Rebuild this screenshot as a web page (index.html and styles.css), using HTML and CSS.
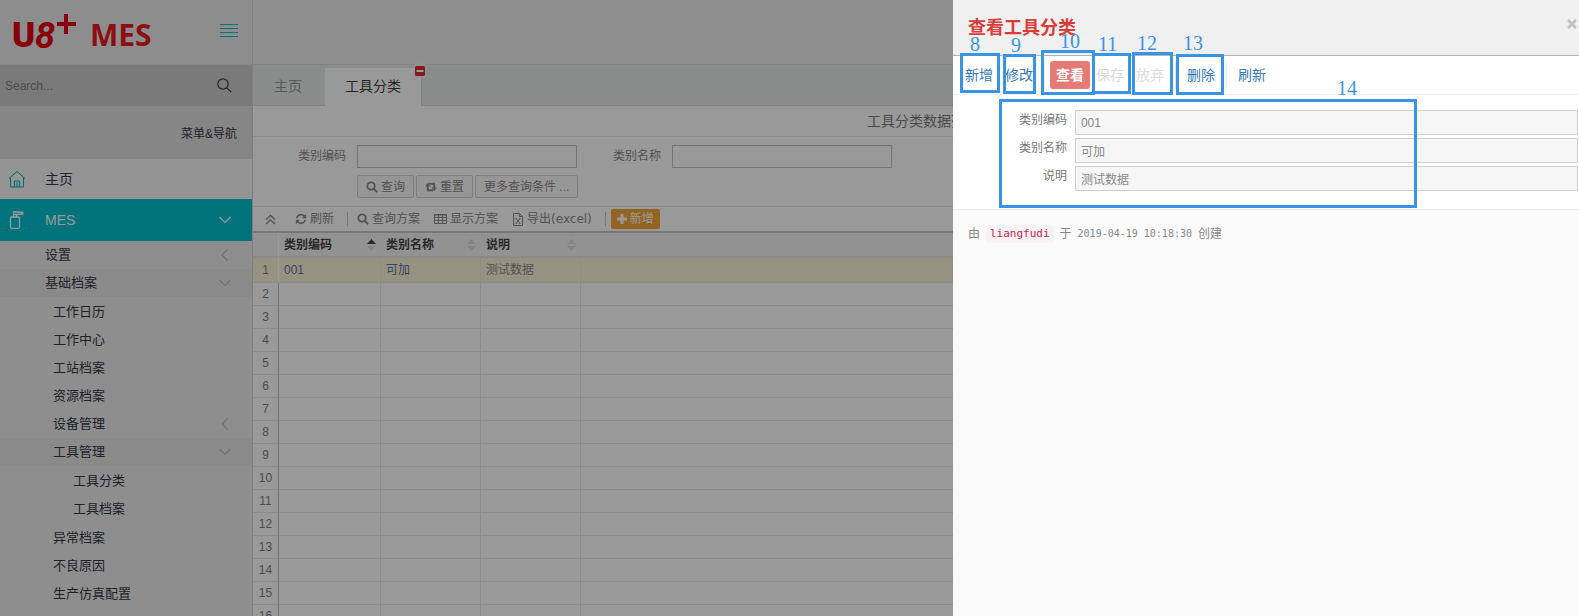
FILE: index.html
```html
<!DOCTYPE html>
<html lang="zh-CN">
<head>
<meta charset="utf-8">
<title>U8+ MES</title>
<link rel="stylesheet" href="styles.css">
</head>
<body>
<svg class="defs" aria-hidden="true">
  <symbol id="search" viewBox="0 0 13 13"><g fill="none" stroke="currentColor" stroke-width="2"><circle cx="5.500" cy="5.500" r="4"/><path stroke-linecap="round" stroke-width="2.200" d="m8.800 8.800 2.700 2.700"/></g></symbol>
  <symbol id="refresh" viewBox="0 0 1792 1792"><path fill="currentColor" d="M1639 1056q0 5-1 7-64 268-268 434.500t-478 166.500q-146 0-282.500-55t-243.500-157l-129 129q-19 19-45 19t-45-19-19-45v-448q0-26 19-45t45-19h448q26 0 45 19t19 45-19 45l-137 137q71 66 161 102t187 36q134 0 250-65t186-179q11-17 53-117 8-23 30-23h192q13 0 22.500 9.500t9.500 22.500zm25-800v448q0 26-19 45t-45 19h-448q-26 0-45-19t-19-45 19-45l138-138q-148-137-349-137-134 0-250 65t-186 179q-11 17-53 117-8 23-30 23h-199q-13 0-22.500-9.500t-9.500-22.500v-7q65-268 270-434.500t480-166.500q146 0 284 55.500t245 156.500l130-129q19-19 45-19t45 19 19 45z"/></symbol>
  <symbol id="down" viewBox="0 0 12 12"><path fill="none" stroke="currentColor" stroke-width="1.200" d="M.5 3 6 8.500 11.500 3"/></symbol>
  <symbol id="left" viewBox="0 0 12 12"><path fill="none" stroke="currentColor" stroke-width="1.200" d="M8.500.5 3 6l5.500 5.500"/></symbol>
  <symbol id="sort" viewBox="0 0 9 12"><path class="up" d="M0 5h9L4.500 0z"/><path class="dn" d="M0 7h9L4.500 12z"/></symbol>
</svg>

<div class="app">
  <aside class="sidebar">
    <div class="brand">
      <svg class="logo" width="146" height="52" viewBox="0 0 146 52" role="img" aria-label="U8+ MES">
        <text class="logo-u" x="-1" y="41">U</text>
        <text class="logo-8" x="22" y="42">8</text>
        <path fill="#e60012" d="M51 8h4v8h8v4h-8v8h-4v-8h-7v-4h7z"/>
        <text class="logo-mes" x="77" y="40">MES</text>
      </svg>
      <button class="menu-toggle" type="button" aria-label="切换菜单"><svg width="18" height="16" viewBox="0 0 18 16"><path stroke="currentColor" d="M0 .5h18M0 4.500h18M0 8.500h18M0 12.500h18"/></svg></button>
    </div>
    <form class="side-search">
      <input type="text" placeholder="Search..." aria-label="搜索菜单">
      <button type="button" aria-label="搜索"><svg width="15" height="15" viewBox="0 0 15 15"><g fill="none" stroke="currentColor" stroke-width="1.200"><circle cx="6" cy="6" r="5.200"/><path d="m9.800 9.800 4.400 4.400"/></g></svg></button>
    </form>
    <div class="side-label">菜单&amp;导航</div>
    <nav class="menu">
      <a class="top" href="#"><svg class="lead" width="18" height="18" viewBox="0 0 18 18"><path fill="none" stroke="currentColor" d="M1 8.500 9 1.500l8 7M2.500 7.500v9.500h13V7.500M6.500 17v-6h5v6M9 12v5"/></svg>主页</a>
      <a class="top active" href="#"><svg class="lead" width="18" height="18" viewBox="0 0 18 18"><g fill="none" stroke="currentColor" stroke-width="1.300"><rect x="2.500" y="6" width="9" height="11.300" rx="1"/><path d="M5.500 6V3.500h3V6M5.500 2.500V1H9l6.500.500M9 3.500l6.500-.500"/></g></svg>MES<svg class="chev" width="12" height="12"><use href="#down"/></svg></a>
      <a class="lv1" href="#">设置<svg class="chev" width="12" height="12"><use href="#left"/></svg></a>
      <a class="lv1 open" href="#">基础档案<svg class="chev" width="12" height="12"><use href="#down"/></svg></a>
      <div class="sub">
        <a class="lv2" href="#">工作日历</a>
        <a class="lv2" href="#">工作中心</a>
        <a class="lv2" href="#">工站档案</a>
        <a class="lv2" href="#">资源档案</a>
        <a class="lv2" href="#">设备管理<svg class="chev" width="12" height="12"><use href="#left"/></svg></a>
        <a class="lv2 open" href="#">工具管理<svg class="chev" width="12" height="12"><use href="#down"/></svg></a>
        <div class="sub">
          <a class="lv3" href="#">工具分类</a>
          <a class="lv3" href="#">工具档案</a>
        </div>
        <a class="lv2" href="#">异常档案</a>
        <a class="lv2" href="#">不良原因</a>
        <a class="lv2" href="#">生产仿真配置</a>
      </div>
    </nav>
  </aside>

  <main class="main">
    <div class="topbar"></div>
    <div class="tabs">
      <a class="tab" href="#">主页</a>
      <a class="tab current" href="#">工具分类<span class="tab-close"><svg width="13" height="15" viewBox="0 0 13 15"><rect x="1" y="3" width="10" height="10" rx="1.500" fill="#e02828"/><path stroke="#fff" stroke-width="2" d="M2.500 8h7"/></svg></span></a>
    </div>
    <h2 class="page-title">工具分类数据列表</h2>
    <form class="filter">
      <label for="f-code">类别编码</label><input id="f-code" type="text">
      <label for="f-name">类别名称</label><input id="f-name" type="text">
      <div class="filter-actions">
        <button type="button"><svg width="12" height="12"><use href="#search"/></svg>查询</button>
        <button type="button"><svg width="12" height="12" viewBox="0 0 13 13"><path fill="currentColor" d="M3 2 6 6H4v3h4l1.500 2H2V6H0zM10 11 7 7h2V4H5L3.500 2H11v5h2z"/></svg>重置</button>
        <button type="button" class="more">更多查询条件 ...</button>
      </div>
    </form>
    <div class="toolbar">
      <button type="button" class="collapse" aria-label="收起"><svg width="11" height="11" viewBox="0 0 11 11"><path fill="none" stroke="currentColor" stroke-width="1.400" d="m1 5.500 4.500-4 4.500 4M1 10l4.500-4 4.500 4"/></svg></button>
      <button type="button" class="reload"><svg width="12" height="12"><use href="#refresh"/></svg>刷新</button>
      <span class="sep"></span>
      <button type="button"><svg width="12" height="12"><use href="#search"/></svg>查询方案</button>
      <button type="button"><svg width="13" height="12" viewBox="0 0 13 12"><path fill="none" stroke="currentColor" d="M.5 1.500h12v9H.5zM.5 4.500h12M.5 7.500h12M4.500 1.500v9M8.500 1.500v9M.5 2h12"/></svg>显示方案</button>
      <button type="button" class="export"><svg width="12" height="13" viewBox="0 0 12 13"><path fill="none" stroke="currentColor" d="M1.500.5h6l3 3v9h-9zM7.500.5v3h3M4 5.500l4 5M8 5.500l-4 5M3.500 5.500h1.500M7 5.500h1.500M3.500 10.500h1.500M7 10.500h1.500"/></svg>导出(excel)</button>
      <span class="sep"></span>
      <button type="button" class="add"><svg width="10" height="10" viewBox="0 0 10 10"><path fill="currentColor" d="M3.500 0h3v3.500H10v3H6.500V10h-3V6.500H0v-3h3.500z"/></svg>新增</button>
    </div>
    <table class="grid">
      <colgroup><col class="c-num"><col class="c-first"><col class="c-mid"><col class="c-mid"><col></colgroup>
      <thead><tr><th></th>
        <th>类别编码<svg class="sort asc" width="9" height="12"><use href="#sort"/></svg></th>
        <th>类别名称<svg class="sort" width="9" height="12"><use href="#sort"/></svg></th>
        <th>说明<svg class="sort" width="9" height="12"><use href="#sort"/></svg></th><th></th></tr></thead>
      <tbody>
        <tr class="selected"><td>1</td><td><a href="#">001</a></td><td><a href="#">可加</a></td><td>测试数据</td><td></td></tr>
        <tr><td>2</td><td></td><td></td><td></td><td></td></tr>
        <tr><td>3</td><td></td><td></td><td></td><td></td></tr>
        <tr><td>4</td><td></td><td></td><td></td><td></td></tr>
        <tr><td>5</td><td></td><td></td><td></td><td></td></tr>
        <tr><td>6</td><td></td><td></td><td></td><td></td></tr>
        <tr><td>7</td><td></td><td></td><td></td><td></td></tr>
        <tr><td>8</td><td></td><td></td><td></td><td></td></tr>
        <tr><td>9</td><td></td><td></td><td></td><td></td></tr>
        <tr><td>10</td><td></td><td></td><td></td><td></td></tr>
        <tr><td>11</td><td></td><td></td><td></td><td></td></tr>
        <tr><td>12</td><td></td><td></td><td></td><td></td></tr>
        <tr><td>13</td><td></td><td></td><td></td><td></td></tr>
        <tr><td>14</td><td></td><td></td><td></td><td></td></tr>
        <tr><td>15</td><td></td><td></td><td></td><td></td></tr>
        <tr><td>16</td><td></td><td></td><td></td><td></td></tr>
      </tbody>
    </table>
  </main>
</div>

<div class="backdrop"></div>

<section class="drawer" role="dialog" aria-labelledby="drawer-title">
  <header class="drawer-head">
    <h1 id="drawer-title">查看工具分类</h1>
    <button type="button" class="close" aria-label="关闭"><svg width="10" height="10" viewBox="0 0 10 10"><path stroke="currentColor" stroke-width="2.500" d="m1 1 8 8M9 1 1 9"/></svg></button>
  </header>
  <div class="drawer-tools">
    <button type="button">新增</button>
    <button type="button">修改</button>
    <span class="line"></span>
    <button type="button" class="view">查看</button>
    <button type="button" disabled>保存</button>
    <button type="button" disabled>放弃</button>
    <span class="line"></span>
    <button type="button">删除</button>
    <span class="line"></span>
    <button type="button">刷新</button>
  </div>
  <form class="detail">
    <label for="d-code">类别编码</label><input id="d-code" type="text" value="001" readonly>
    <label for="d-name">类别名称</label><input id="d-name" type="text" value="可加" readonly>
    <label for="d-note">说明</label><input id="d-note" type="text" value="测试数据" readonly>
  </form>
  <footer class="drawer-foot"><span>由</span><code>liangfudi</code><span>于</span><time>2019-04-19 10:18:30</time><span>创建</span></footer>

  <div class="mark m8"><b>8</b></div>
  <div class="mark m9"><b>9</b></div>
  <div class="mark m10"><b>10</b></div>
  <div class="mark m11"><b>11</b></div>
  <div class="mark m12"><b>12</b></div>
  <div class="mark m13"><b>13</b></div>
  <div class="mark m14"><b>14</b></div>
</section>
</body>
</html>
```
FILE: styles.css
```css
* { box-sizing: border-box; }

body {
  margin: 0;
  height: 100vh;
  overflow: hidden;
  font: 12px/20px "Liberation Sans", "Noto Sans CJK SC", sans-serif;
  color: #8a8a8a;
  background: #fff;
}

a { color: inherit; text-decoration: none; }
button, input { font: inherit; color: inherit; margin: 0; padding: 0; border: 0; border-radius: 0; background: none; outline: 0; }
svg { flex: none; display: block; }
.defs { position: absolute; width: 0; height: 0; }

.app { display: flex; height: 100vh; overflow: hidden; }

/* Sidebar */
.sidebar { flex: none; width: 253px; border-right: 1px solid #d4d4d4; background: #ededed; color: #353a48; overflow: hidden; }
.brand { display: flex; align-items: center; justify-content: space-between; height: 65px; padding: 0 14px 0 13px; border-bottom: 1px solid #dcdcdc; background: #ebebeb; }
.logo { overflow: visible; }
.logo text { fill: #e60012; }
.logo .logo-u { font: 900 35px Roboto, sans-serif; }
.logo .logo-8 { font: italic 700 36px Roboto, sans-serif; }
.logo .logo-mes { fill: #ea1a22; font: 700 30px "Open Sans", sans-serif; }
.menu-toggle { color: #00bfcf; }
.side-search { display: flex; align-items: center; height: 41px; padding: 0 20px 0 5px; background: #cbcbcb; color: #33363c; }
.side-search input { flex: 1; min-width: 0; }
.side-search input::placeholder { color: #808080; }
.side-label { height: 53px; padding: 18px 15px 0 0; text-align: right; background: #dfdfdf; }
.menu a { display: flex; align-items: center; height: 28px; padding: 0 21px 0 45px; font-size: 13px; }
.menu a.top { height: 40px; padding-left: 8px; font-size: 14px; background: #f7f7f7; }
.menu a.active { height: 42px; background: #00c0d1; color: #fff; }
.menu .lead { margin-right: 19px; color: #00b0c0; }
.menu .active .lead { color: #fff; }
.menu .chev { margin-left: auto; color: #bfbfc4; }
.menu .active .chev { color: #fff; }
.menu .open { background: #e6e6e6; }
.menu .lv2 { padding-left: 53px; }
.menu .lv3 { padding-left: 73px; }
.menu .sub { padding: 1px 0; }

/* List page */
.main { flex: 1; min-width: 0; background: #fff; }
.topbar { height: 65px; border-bottom: 1px solid #dadada; background: #efefef; }
.tabs { display: flex; align-items: stretch; height: 41px; padding-top: 3px; border-bottom: 1px solid #d8dcdb; background: #e5eae8; font-size: 14px; }
.tab { position: relative; display: flex; align-items: center; padding: 0 23px 0 21px; height: 35px; color: #8f9493; }
.tab.current { height: 38px; padding: 0 20px 3px; border-right: 1px solid #d8dcdb; background: #fff; color: #404040; }
.tab-close { position: absolute; right: -6px; top: -5px; border-radius: 3px; background: #f1f3f2; }
.page-title { margin: 0; height: 31px; padding-left: 14px; border-bottom: 1px solid #ececec; text-align: center; font-size: 14px; line-height: 30px; font-weight: 400; color: #7c7c7c; }
.filter { display: grid; grid-template-columns: 93px 220px 73px 220px; column-gap: 11px; row-gap: 7px; padding: 8px 0; }
.filter label { text-align: right; line-height: 22px; }
.filter input { height: 23px; border: 1px solid #c4c4c4; }
.filter-actions { grid-column: 2 / -1; display: flex; gap: 2px; }
.filter-actions button { display: flex; align-items: center; gap: 3px; height: 23px; padding: 0 8px; border: 1px solid #d2d2d2; border-radius: 2px; background: #fafafa; }
.toolbar { display: flex; align-items: center; height: 27px; padding-left: 12px; border-top: 1px solid #e8e8e8; border-bottom: 2px solid #c9c6c2; font-family: "DejaVu Sans", "Noto Sans CJK SC", sans-serif; }
.toolbar button { display: flex; align-items: center; gap: 3px; margin-right: 14px; }
.toolbar .collapse { margin-right: 19px; }
.toolbar .reload, .toolbar .export { margin-right: 13px; }
.toolbar .sep { width: 1px; height: 14px; margin-right: 9px; background: #c8c8c8; }
.toolbar .add { height: 20px; margin: 0 0 0 -4px; padding: 0 6px; border-radius: 2px; background: #f5a636; color: #fff; }

.grid { width: 100%; table-layout: fixed; border-collapse: separate; border-spacing: 0; }
.c-num { width: 26px; }
.c-first { width: 102px; }
.c-mid { width: 100px; }
.grid th { height: 25px; padding: 1px 5px 0; border-bottom: 2px solid #e6e6e6; background: #f4f4f4; text-align: left; line-height: 20px; color: #444; }
.grid th:first-child { border-right: 1px solid #fff; }
.grid td { height: 23px; padding: 0 5px; border-right: 1px solid #e9e9e9; border-bottom: 1px solid #e9e9e9; line-height: 18px; }
.grid td:first-child { padding: 0; border-right-color: #c4c4c4; text-align: center; color: #808080; }
.grid td:last-child { border-right: 0; }
.grid .selected td { height: 25px; background: #fbf4d9; }
.grid .selected td:first-child { border-right-color: #fff; }
.grid .selected a { color: #5b75a3; }
.sort { float: right; margin-top: 4px; fill: #dcdcdc; }
.sort.asc { --up: #444; }
.up { fill: var(--up, #dcdcdc); }

.backdrop { position: fixed; inset: 0; background: rgba(0, 0, 0, .4); }

/* Detail drawer */
.drawer { position: fixed; top: 0; right: 0; bottom: 0; width: 39.65%; background: #fafafa; }
.drawer-head { display: flex; align-items: center; justify-content: space-between; height: 56px; padding: 0 2px 0 15px; border-bottom: 1px solid #b4b4b4; background: #f0f0f0; }
.drawer-head h1 { margin: 0; font-size: 18px; line-height: 24px; font-weight: 700; color: #d83d38; }
.close { align-self: flex-start; margin-top: 19px; color: #c0c0c0; }
.drawer-tools { display: flex; align-items: center; height: 39px; padding-left: 6px; border-bottom: 1px solid #efefef; background: #fff; font-size: 14px; color: #337ab7; }
.drawer-tools button { height: 28px; padding: 0 6px; }
.drawer-tools .line { width: 1px; height: 28px; margin: 0 5px; background: #eee; }
.drawer-tools .view { border-radius: 3px; background: #e57a77; color: #fff; font-weight: 700; }
.drawer-tools button:disabled { color: #dcdcdc; }
.detail { display: grid; grid-template-columns: 114px 1fr; column-gap: 8px; row-gap: 3px; padding: 15px 1px 18px 0; border-bottom: 1px solid #ececec; background: #fff; }
.detail label { text-align: right; line-height: 20px; color: #777; }
.detail input { min-width: 0; height: 25px; padding: 0 5px; border: 1px solid #d0d0d0; background: #f6f6f6; color: #888; }
.drawer-foot { display: flex; align-items: center; gap: 6px; padding: 15px 15px; line-height: 18px; color: #888; }
.drawer-foot code { padding: 0 4px; border-radius: 4px; background: #f9f2f4; color: #c7254e; font: 400 11px/18px "DejaVu Sans Mono", monospace; }
.drawer-foot time { font: 10px/18px "DejaVu Sans Mono", monospace; }

/* Numbered callouts drawn over the drawer */
.mark { position: absolute; border: 3px solid #3a94e5; pointer-events: none; }
.mark b { position: absolute; top: -22px; font: 400 20px/20px "Liberation Serif", serif; color: #3a94e5; }
.m8 { left: 7px; top: 53px; width: 40px; height: 40px; }
.m8 b { left: 7px; }
.m9 { left: 50px; top: 54px; width: 33px; height: 40px; }
.m9 b { left: 5px; }
.m10 { left: 88px; top: 50px; width: 54px; height: 45px; }
.m10 b { left: 16px; }
.m11 { left: 139px; top: 53px; width: 39px; height: 41px; }
.m11 b { left: 3px; }
.m12 { left: 179px; top: 52px; width: 41px; height: 43px; }
.m12 b { left: 2px; }
.m13 { left: 223px; top: 54px; width: 48px; height: 41px; }
.m13 b { left: 4px; top: -24px; }
.m14 { left: 46px; top: 99px; width: 418px; height: 109px; }
.m14 b { right: 57px; top: -24px; }
```
